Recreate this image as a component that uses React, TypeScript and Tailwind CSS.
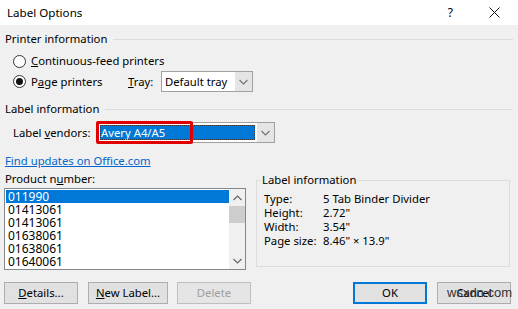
import React from 'react';

const Chevron: React.FC<{ up?: boolean; className?: string }> = ({ up, className }) => (
    <svg width="9" height="6" viewBox="0 0 9 6" className={className}>
        <path
            d={up ? 'M0.5 5 L4.5 1 L8.5 5' : 'M0.5 1 L4.5 5 L8.5 1'}
            fill="none"
            stroke="currentColor"
            strokeWidth="1.1"
        />
    </svg>
);

const Radio: React.FC<{ checked?: boolean }> = ({ checked }) => (
    <span className="w-[13px] h-[13px] shrink-0 rounded-full border border-[#333] bg-white flex items-center justify-center">
        {checked && <span className="w-[7px] h-[7px] rounded-full bg-[#111]" />}
    </span>
);

const GroupHeader: React.FC<{ title: string }> = ({ title }) => (
    <div className="flex items-center h-4">
        <span>{title}</span>
        <div className="flex-1 h-px bg-[#dcdcdc] ml-[6px]" />
    </div>
);

const Btn: React.FC<{ children: React.ReactNode; primary?: boolean; disabled?: boolean; wide?: boolean }> = ({
    children,
    primary,
    disabled,
    wide,
}) => (
    <div
        className={`${wide ? 'w-[80px]' : 'w-[74px]'} h-[22px] flex items-center justify-center
            ${primary ? 'border-2 border-[#0078d7] bg-[#e1e1e1]' : 'border border-[#adadad] bg-[#e1e1e1]'}
            ${disabled ? 'text-[#a0a0a0] border-[#bfbfbf] bg-[#e5e5e5]' : 'text-black'}`}
    >
        {children}
    </div>
);

const PRODUCTS = ['011990', '01413061', '01413061', '01638061', '01638061', '01640061'];

const INFO = [
    ['Type:', '5 Tab Binder Divider'],
    ['Height:', '2.72"'],
    ['Width:', '3.54"'],
    ['Page size:', '8.46" × 13.9"'],
];

const App: React.FC = () => {
    return (
        <div
            className="w-[518px] h-[309px] bg-[#f0f0f0] text-[11.3px] text-black relative overflow-hidden leading-4"
            style={{ fontFamily: '"Noto Sans", sans-serif' }}
        >
            {/* Title bar */}
            <div className="h-[25px] bg-white flex items-center pl-[7px]">
                <span className="text-[11.6px]">Label Options</span>
                <span className="ml-auto mr-[36px] text-[12px]">?</span>
                <svg width="11" height="11" viewBox="0 0 11 11" className="mr-[18px]">
                    <path d="M0.5 0.5 L10.5 10.5 M10.5 0.5 L0.5 10.5" stroke="#111" strokeWidth="1" />
                </svg>
            </div>

            <div className="px-[5px]">
                {/* Printer information */}
                <div className="mt-[6px]">
                    <GroupHeader title="Printer information" />
                </div>
                <div className="flex items-center mt-[6px] h-4 pl-[8px]">
                    <Radio />
                    <span className="ml-[5px]">
                        <u>C</u>ontinuous-feed printers
                    </span>
                </div>
                <div className="flex items-center mt-[2px] h-[21px] pl-[8px]">
                    <Radio checked />
                    <span className="ml-[5px] w-[97px] shrink-0">
                        P<u>a</u>ge printers
                    </span>
                    <span className="w-[33px] shrink-0">
                        <u>T</u>ray:
                    </span>
                    <div className="w-[92px] h-[21px] border border-[#a0a0a0] bg-white flex">
                        <div className="flex-1 flex items-center pl-[3px]">Default tray</div>
                        <div className="w-[17px] bg-[#e5e5e5] flex items-center justify-center text-[#707070]">
                            <Chevron />
                        </div>
                    </div>
                </div>

                {/* Label information */}
                <div className="mt-[9px]">
                    <GroupHeader title="Label information" />
                </div>
                <div className="flex items-center mt-[5px] h-[21px] pl-[8px]">
                    <span className="w-[84px] shrink-0">
                        Label <u>v</u>endors:
                    </span>
                    <div className="w-[178px] h-[21px] border border-[#a0a0a0] bg-white flex relative">
                        <div className="flex-1 m-[2px] bg-[#0078d7] text-white flex items-center pl-[1px] outline-1 outline-dotted outline-[#333] -outline-offset-1">
                            Avery A4/A5
                        </div>
                        <div className="w-[17px] bg-[#e5e5e5] flex items-center justify-center text-[#707070]">
                            <Chevron />
                        </div>
                        <div className="absolute -left-[2px] -top-[2px] w-[97px] h-[23px] border-[3px] border-[#e00000] rounded-[2px]" />
                    </div>
                </div>

                <div className="mt-[10px] h-4">
                    <span className="text-[#0066cc] underline">Find updates on Office.com</span>
                </div>

                {/* Lower section */}
                <div className="flex mt-[2px]">
                    <div className="w-[242px] shrink-0 -ml-px">
                        <div className="h-4 pl-[1px]">
                            Product n<u>u</u>mber:
                        </div>
                        <div className="mt-px h-[82px] border border-[#828790] bg-white flex">
                            <div className="flex-1 pt-px pl-px text-[12px]">
                                {PRODUCTS.map((p, i) => (
                                    <div
                                        key={i}
                                        className={`h-[13px] flex items-center pl-[2px] leading-[13px] ${
                                            i === 0 ? 'bg-[#0078d7] text-white' : ''
                                        }`}
                                    >
                                        {p}
                                    </div>
                                ))}
                            </div>
                            <div className="w-[16px] bg-[#f0f0f0] flex flex-col items-center text-[#606060]">
                                <div className="h-[17px] flex items-center justify-center">
                                    <Chevron up />
                                </div>
                                <div className="w-full h-[17px] bg-[#cdcdcd]" />
                                <div className="flex-1" />
                                <div className="h-[17px] flex items-center justify-center">
                                    <Chevron />
                                </div>
                            </div>
                        </div>
                    </div>

                    <div className="ml-[10px] mt-[9px] w-[254px] shrink-0 h-[87px] border border-[#dcdcdc] relative pl-[7px] pt-[11px]">
                        <span className="absolute left-[4px] -top-[9px] bg-[#f0f0f0] px-px">Label information</span>
                        {INFO.map(([k, v]) => (
                            <div key={k} className="flex h-[14px] items-center">
                                <span className="w-[59px] shrink-0">{k}</span>
                                <span>{v}</span>
                            </div>
                        ))}
                    </div>
                </div>

                {/* Buttons */}
                <div className="flex items-center mt-[12px] -ml-px mr-[2px]">
                    <Btn>
                        <span>
                            <u>D</u>etails...
                        </span>
                    </Btn>
                    <div className="ml-[10px]">
                        <Btn wide>
                            <span>
                                <u>N</u>ew Label...
                            </span>
                        </Btn>
                    </div>
                    <div className="ml-[9px]">
                        <Btn disabled>Delete</Btn>
                    </div>
                    <div className="ml-auto">
                        <Btn primary>OK</Btn>
                    </div>
                    <div className="ml-[10px]">
                        <Btn>Cancel</Btn>
                    </div>
                </div>
            </div>

            {/* watermark */}
            <div
                className="absolute left-[447px] top-[286px] text-[13px] leading-[13px] text-[#333] pointer-events-none"
                style={{ fontFamily: '"Liberation Sans", sans-serif' }}
            >
                wsxdn.com
            </div>
        </div>
    );
};

export default App;
